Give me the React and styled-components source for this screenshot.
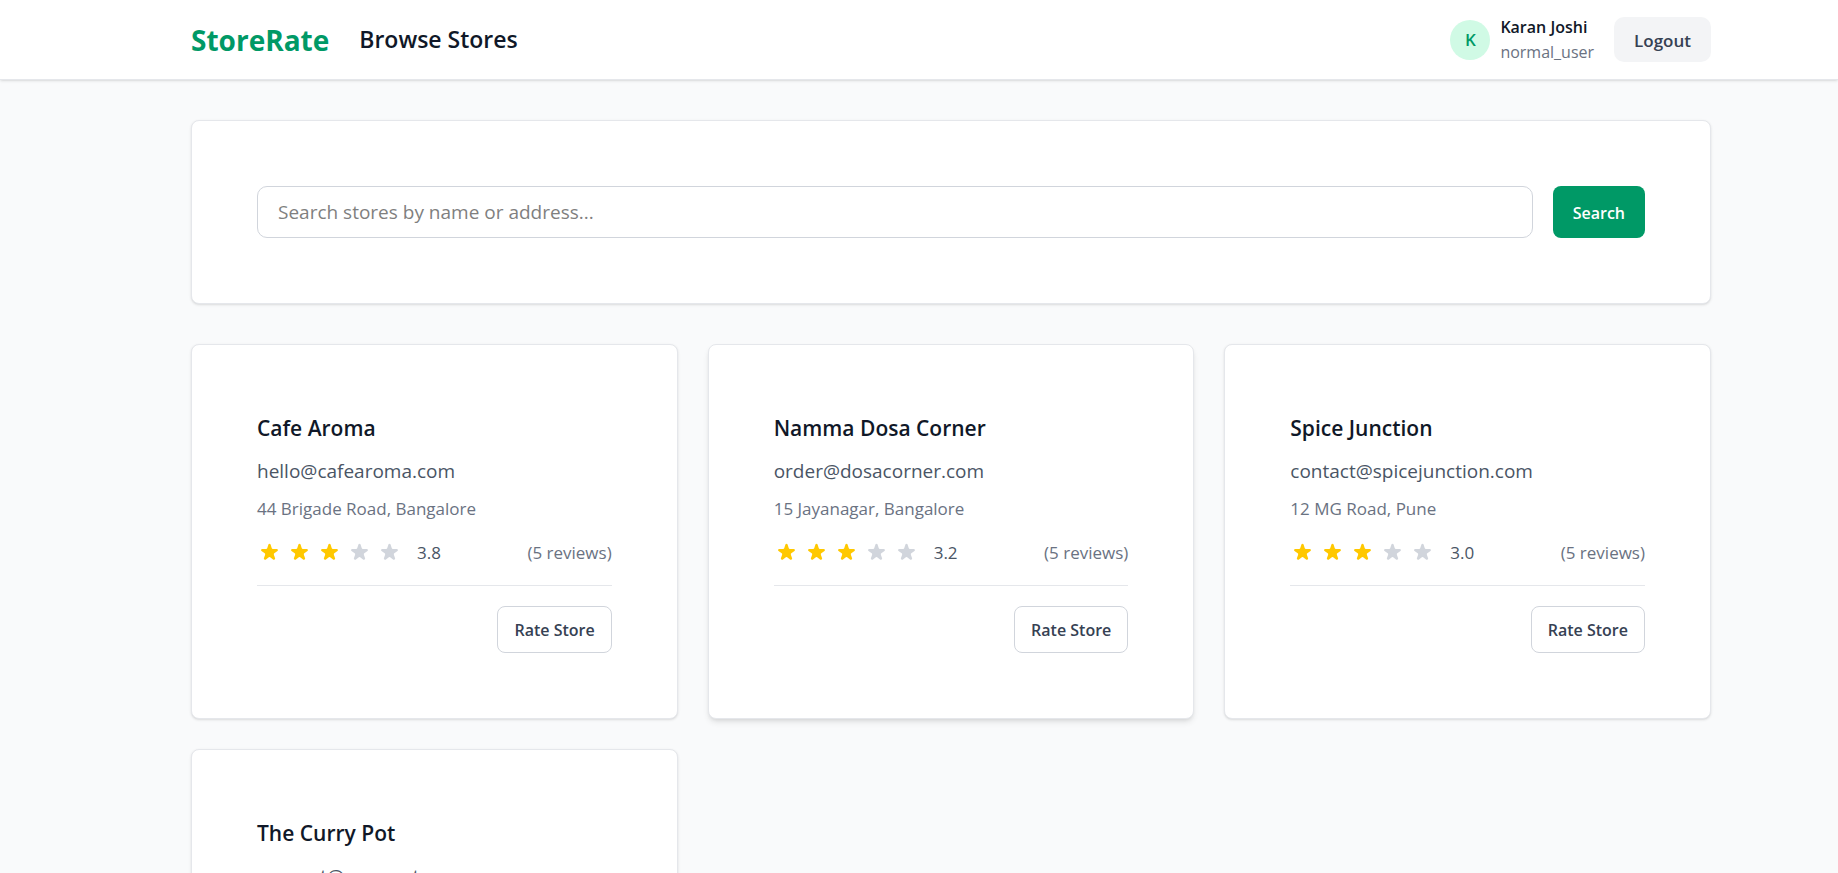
import React, { useState } from "react";
import styled, { createGlobalStyle } from "styled-components";

const GlobalStyle = createGlobalStyle`
  *, *::before, *::after { box-sizing: border-box; }
  body {
    margin: 0;
    background: #f9fafb;
    color: #101828;
    font-family: "Segoe UI", "Open Sans", "Noto Sans", sans-serif;
    font-size: 19px;
    line-height: 30px;
  }
  button, input { font: inherit; }
`;

const Header = styled.header`
  background: #fff;
  box-shadow: 0 1px 3px rgba(0, 0, 0, 0.1), 0 1px 2px -1px rgba(0, 0, 0, 0.1);
  border-bottom: 1px solid #e5e7eb;
`;

const HeaderInner = styled.div`
  display: flex;
  align-items: center;
  justify-content: space-between;
  min-height: 79px;
  padding: 0 127px 0 191px;
`;

const Brand = styled.div`
  display: flex;
  align-items: center;
  gap: 30px;
`;

const Logo = styled.a`
  color: #009966;
  font-size: 28px;
  font-weight: 700;
  line-height: 40px;
  text-decoration: none;
`;

const PageTitle = styled.h1`
  margin: 0;
  font-size: 23px;
  font-weight: 600;
  line-height: 35px;
`;

const Account = styled.div`
  display: flex;
  align-items: center;
  gap: 20px;
`;

const User = styled.div`
  display: flex;
  align-items: center;
  gap: 10px;
`;

const Avatar = styled.span`
  display: grid;
  place-items: center;
  width: 40px;
  height: 40px;
  border-radius: 50%;
  background: #d0fae5;
  color: #009966;
  font-size: 17px;
  font-weight: 600;
`;

const UserText = styled.div`
  font-size: 16px;
  line-height: 25px;
`;

const UserName = styled.div`
  font-weight: 600;
`;

const UserRole = styled.div`
  color: #6a7282;
`;

const Button = styled.button`
  border: 0;
  border-radius: 10px;
  padding: 11px 20px 9px;
  background: #f3f4f6;
  color: #364153;
  font-size: 17px;
  font-weight: 600;
  line-height: 25px;
  cursor: pointer;
`;

const PrimaryButton = styled(Button)`
  border-radius: 8px;
  background: #009966;
  color: #fff;
  font-size: 16px;
`;

const OutlineButton = styled(Button)`
  border: 1px solid #d1d5dc;
  border-radius: 8px;
  padding: 11px 16px 9px;
  background: #fff;
  font-size: 16px;
`;

const Main = styled.main`
  display: grid;
  gap: 40px;
  padding: 40px 127px 40px 191px;
`;

const Card = styled.article`
  padding: 65px;
  border: 1px solid #e5e7eb;
  border-radius: 8px;
  background: #fff;
  box-shadow: ${({ $raised }) =>
    $raised
      ? "0 4px 6px -1px rgba(0, 0, 0, 0.1), 0 2px 4px -2px rgba(0, 0, 0, 0.1)"
      : "0 1px 3px rgba(0, 0, 0, 0.1), 0 1px 2px -1px rgba(0, 0, 0, 0.1)"};
`;

const SearchForm = styled.form`
  display: flex;
  gap: 20px;
`;

const SearchInput = styled.input`
  flex: 1;
  min-width: 0;
  height: 52px;
  padding: 0 20px;
  border: 1px solid #d1d5dc;
  border-radius: 10px;
  background: #fff;
  color: #101828;
  &::placeholder { color: #7f7f7f; opacity: 1; }
`;

const StoreGrid = styled.section`
  display: grid;
  grid-template-columns: repeat(3, minmax(0, 1fr));
  gap: 30px;
`;

const StoreName = styled.h2`
  margin: 0;
  font-size: 21px;
  font-weight: 600;
  line-height: 36px;
`;

const Email = styled.p`
  margin: 10px 0 0;
  color: #4a5565;
`;

const Address = styled.p`
  margin: 10px 0 0;
  color: #6a7282;
  font-size: 17px;
  line-height: 25px;
`;

const RatingRow = styled.div`
  display: flex;
  align-items: center;
  justify-content: space-between;
  margin-top: 19px;
  font-size: 17px;
  line-height: 25px;
`;

const Rating = styled.div`
  display: flex;
  align-items: center;
  gap: 5px;
  color: #4a5565;
`;

const Score = styled.span`
  margin-left: 10px;
`;

const Reviews = styled.span`
  color: #6a7282;
`;

const StarIcon = styled.svg`
  width: 25px;
  height: 25px;
  fill: ${({ $filled }) => ($filled ? "#ffc800" : "#d1d5dc")};
`;

const CardActions = styled.div`
  display: flex;
  justify-content: flex-end;
  margin-top: 20px;
  padding-top: 20px;
  border-top: 1px solid #e5e7eb;
`;

const stores = [
  { name: "Cafe Aroma", email: "hello@cafearoma.com", address: "44 Brigade Road, Bangalore", rating: 3.8 },
  { name: "Namma Dosa Corner", email: "order@dosacorner.com", address: "15 Jayanagar, Bangalore", rating: 3.2, raised: true },
  { name: "Spice Junction", email: "contact@spicejunction.com", address: "12 MG Road, Pune", rating: 3.0 },
  { name: "The Curry Pot", email: "support@currypot.com", address: "8 Park Street, Kolkata", rating: 3.0 },
];

function Star({ filled }) {
  return (
    <StarIcon $filled={filled} viewBox="-1 -1 22 22" aria-hidden="true">
      <path d="M9.049 2.927c.3-.921 1.603-.921 1.902 0l1.07 3.292a1 1 0 00.95.69h3.462c.969 0 1.371 1.24.588 1.81l-2.8 2.034a1 1 0 00-.364 1.118l1.07 3.292c.3.921-.755 1.688-1.54 1.118l-2.8-2.034a1 1 0 00-1.175 0l-2.8 2.034c-.784.57-1.838-.197-1.539-1.118l1.07-3.292a1 1 0 00-.364-1.118L2.98 8.72c-.783-.57-.38-1.81.588-1.81h3.461a1 1 0 00.951-.69l1.07-3.292z" />
    </StarIcon>
  );
}

function StoreCard({ name, email, address, rating, raised }) {
  return (
    <Card $raised={raised}>
      <StoreName>{name}</StoreName>
      <Email>{email}</Email>
      <Address>{address}</Address>
      <RatingRow>
        <Rating>
          {[1, 2, 3, 4, 5].map((n) => (
            <Star key={n} filled={n <= Math.floor(rating)} />
          ))}
          <Score>{rating.toFixed(1)}</Score>
        </Rating>
        <Reviews>(5 reviews)</Reviews>
      </RatingRow>
      <CardActions>
        <OutlineButton type="button">Rate Store</OutlineButton>
      </CardActions>
    </Card>
  );
}

export default function App() {
  const [query, setQuery] = useState("");
  return (
    <>
      <GlobalStyle />
      <Header>
        <HeaderInner>
          <Brand>
            <Logo href="#">StoreRate</Logo>
            <PageTitle>Browse Stores</PageTitle>
          </Brand>
          <Account>
            <User>
              <Avatar>K</Avatar>
              <UserText>
                <UserName>Karan Joshi</UserName>
                <UserRole>normal_user</UserRole>
              </UserText>
            </User>
            <Button type="button">Logout</Button>
          </Account>
        </HeaderInner>
      </Header>
      <Main>
        <Card as="section">
          <SearchForm onSubmit={(e) => e.preventDefault()}>
            <SearchInput
              type="text"
              aria-label="Search stores by name or address"
              placeholder="Search stores by name or address..."
              value={query}
              onChange={(e) => setQuery(e.target.value)}
            />
            <PrimaryButton type="submit">Search</PrimaryButton>
          </SearchForm>
        </Card>
        <StoreGrid>
          {stores.map((store) => (
            <StoreCard key={store.name} {...store} />
          ))}
        </StoreGrid>
      </Main>
    </>
  );
}
